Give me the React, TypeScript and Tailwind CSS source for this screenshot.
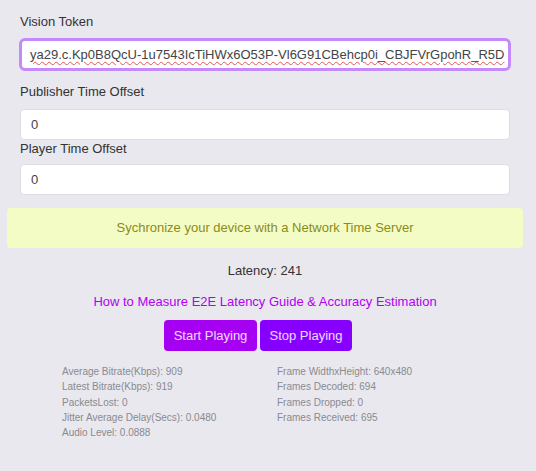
import React from "react";

const leftStats = [
  "Average Bitrate(Kbps): 909",
  "Latest Bitrate(Kbps): 919",
  "PacketsLost: 0",
  "Jitter Average Delay(Secs): 0.0480",
  "Audio Level: 0.0888",
];

const rightStats = [
  "Frame WidthxHeight: 640x480",
  "Frames Decoded: 694",
  "Frames Dropped: 0",
  "Frames Received: 695",
];

export default function App() {
  return (
    <div className="w-[536px] h-[471px] bg-[#e8e8ee] font-['Liberation_Sans',Arial,sans-serif] text-[#333]">
      <div className="w-[530px]">
        <div className="px-5 pt-[13px]">
          <label className="block text-[13px] leading-[18px]">Vision Token</label>
          <div className="mt-[7px] -mx-px rounded-md border-[3px] border-[#c58af9] bg-white h-[33px] flex items-center px-[8px] overflow-hidden">
            <span className="text-[13px] whitespace-nowrap text-[#444] underline decoration-wavy decoration-[#e05555] decoration-1 underline-offset-2">
              ya29.c.Kp0B8QcU-1u7543IcTiHWx6O53P-Vl6G91CBehcp0i_CBJFVrGpohR_R5D
            </span>
          </div>

          <label className="block mt-[12px] text-[13px] leading-[18px]">Publisher Time Offset</label>
          <input
            defaultValue="0"
            className="mt-[8px] block w-full h-[31px] rounded border border-[#dcdce2] bg-white px-[10px] text-[13px] text-[#444] outline-none"
          />

          <label className="block text-[13px] leading-[18px]">Player Time Offset</label>
          <input
            defaultValue="0"
            className="mt-[6px] block w-full h-[31px] rounded border border-[#dcdce2] bg-white px-[10px] text-[13px] text-[#444] outline-none"
          />
        </div>

        <div className="mx-[7px] mt-[13px] h-[40px] rounded bg-[#f4fcc6] flex items-center justify-center text-[13px] text-[#8b8b17]">
          Sychronize your device with a Network Time Server
        </div>

        <div className="mt-[14px] text-center text-[13px] leading-[18px]">Latency: 241</div>

        <div className="mt-[13px] text-center text-[13px] leading-[18px] text-[#b200f2]">
          How to Measure E2E Latency Guide &amp; Accuracy Estimation
        </div>

        <div className="mt-[9px] flex justify-center gap-[3px] pr-[14px]">
          <button className="w-[93px] h-[31px] rounded bg-[#a600f2] text-white/85 text-[13px]">
            Start Playing
          </button>
          <button className="w-[92px] h-[31px] rounded bg-[#8700ff] text-white/85 text-[13px]">
            Stop Playing
          </button>
        </div>

        <div className="mt-[13px] flex pl-[62px] text-[10px] leading-[15.3px] text-[#8a8a90]">
          <div className="w-[215px]">
            {leftStats.map((s) => (
              <div key={s}>{s}</div>
            ))}
          </div>
          <div>
            {rightStats.map((s) => (
              <div key={s}>{s}</div>
            ))}
          </div>
        </div>
      </div>
    </div>
  );
}
